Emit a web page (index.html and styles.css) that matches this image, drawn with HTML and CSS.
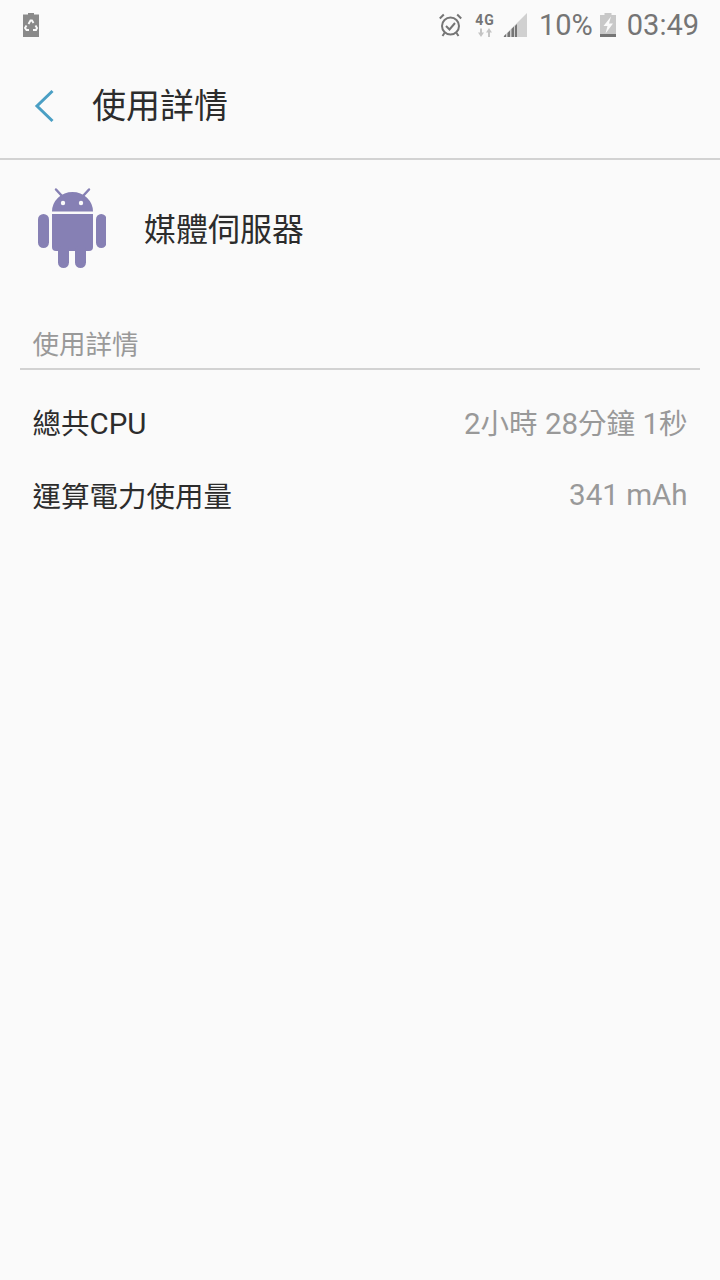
FILE: index.html
```html
<!DOCTYPE html>
<html lang="zh-Hant">
<head>
<meta charset="utf-8">
<title>使用詳情</title>
<link rel="stylesheet" href="styles.css">
</head>
<body>
<div class="status">
  <svg class="ic-recycle" width="16" height="24" viewBox="0 0 16 24"><path d="M5 0h6v1.500h5V24H0V1.500h5z" fill="#8a8a8a"/><path d="M5.500 11l2-3.500h1.500l1.500 2.500M12.500 12.500l1.500 2.500-1 2h-3M6 17H3.500l-1.500-2 1.500-2.500" fill="none" stroke="#fafafa" stroke-width="1.900"/></svg>
  <div class="status-right">
    <svg class="ic-alarm" width="23" height="24" viewBox="0 0 23 24"><circle cx="11.500" cy="13" r="8.500" fill="none" stroke="#757575" stroke-width="2"/><path d="M7 13l3.500 3.500 5.500-6.500M.8 5.500l4-4M22.200 5.500l-4-4M5.500 20l-2 3M17.500 20l2 3" fill="none" stroke="#757575" stroke-width="2"/></svg>
    <div class="net"><span class="net-label">4G</span><svg width="16" height="9" viewBox="0 0 16 9"><path d="M4 5V0.500" stroke="#c4c4c4" stroke-width="2"/><path d="M1 4.500h6L4 9z" fill="#c4c4c4"/><path d="M12 9V4" stroke="#c4c4c4" stroke-width="2"/><path d="M9 4.500h6L12 0z" fill="#c4c4c4"/></svg></div>
    <svg class="ic-signal" width="24" height="24" viewBox="0 0 24 24"><path d="M24 0v24H0z" fill="#d0d0d0"/><path d="M1 24h2v-3l-2 2zM4.500 24h2.500v-6.500l-2.500 2.500zM8.500 24H11V13.500l-2.500 2.500zM12 24h2V11l-2 2z" fill="#757575"/></svg>
    <span class="pct">10%</span>
    <svg class="ic-batt" width="16" height="24" viewBox="0 0 16 24"><path d="M4.500 0h7v2H16v22H0V2h4.500z" fill="#c8c8c8"/><rect y="21" width="16" height="3" fill="#757575"/><path d="M11 3.500L3.500 13H7.500l-2 7.500L13 10.500H9z" fill="#fafafa"/></svg>
    <span class="clock">03:49</span>
  </div>
</div>
<header class="appbar">
  <svg class="back" width="22" height="34" viewBox="0 0 22 34"><path d="M18.500 2L3 17l15.500 15" fill="none" stroke="#4a9fc4" stroke-width="3"/></svg>
  <h1 class="title">使用詳情</h1>
</header>
<section class="app">
  <svg class="android" width="68" height="82" viewBox="0 0 68 82">
    <g fill="#8680b4">
      <path d="M14 24.500a20.500 19.500 0 0 1 41 0z"/>
      <path d="M14 27h41v33a4 4 0 0 1-4 4H18a4 4 0 0 1-4-4z"/>
      <rect x="0" y="27" width="11" height="34" rx="5.500"/>
      <rect x="58" y="27" width="10.500" height="34" rx="5.200"/>
      <rect x="20" y="58" width="11" height="23" rx="5.500"/>
      <rect x="37" y="58" width="11" height="23" rx="5.500"/>
    </g>
    <path d="M24 9l-6-6.500M45 9l6-6.500" stroke="#8680b4" stroke-width="2.500" stroke-linecap="round"/>
    <circle cx="25" cy="16" r="2.200" fill="#fafafa"/><circle cx="43" cy="16" r="2.200" fill="#fafafa"/>
  </svg>
  <div class="app-name">媒體伺服器</div>
</section>
<section class="details">
  <h2 class="section-title">使用詳情</h2>
  <div class="rows">
    <div class="row"><span class="row-label"><span class="cjk">總共</span>CPU</span><span class="row-value">2<span class="cjk">小時</span> 28<span class="cjk">分鐘</span> 1<span class="cjk">秒</span></span></div>
    <div class="row"><span class="row-label"><span class="cjk">運算電力使用量</span></span><span class="row-value">341 mAh</span></div>
  </div>
</section>
</body>
</html>
```
FILE: styles.css
```css
* { box-sizing: border-box; margin: 0; padding: 0; }
html, body { height: 100%; }
body {
  width: 720px;
  height: 1280px;
  overflow: hidden;
  background: #fafafa;
  font-family: Roboto, "Noto Sans CJK TC", sans-serif;
  color: #2c2c2c;
}
.status {
  height: 50px;
  display: flex;
  align-items: center;
  justify-content: space-between;
  padding: 0 21px 0 23px;
}
.status-right { display: flex; align-items: center; }
.ic-alarm { margin-right: 13px; }
.net { display: flex; flex-direction: column; align-items: center; width: 20px; margin-right: 8px; }
.net-label { font-size: 14px; line-height: 15px; font-weight: 700; letter-spacing: 1px; color: #757575; }
.ic-signal { margin-right: 12px; }
.pct, .clock { font-size: 29px; line-height: 34px; color: #757575; }
.pct { margin-right: 7px; }
.ic-batt { margin-right: 11px; }
.appbar {
  height: 110px;
  display: flex;
  align-items: center;
  padding: 3px 0 0 34px;
  border-bottom: 2px solid #d2d2d2;
}
.back { margin-right: 36px; }
.title { font-size: 34px; font-weight: 400; line-height: 44px; }
.app {
  height: 140px;
  display: flex;
  align-items: center;
  padding: 0 0 0 38px;
}
.android { margin-bottom: 5px; }
.app-name { font-size: 32px; line-height: 42px; margin-left: 38px; }
.details { padding: 0 20px; margin-top: 15px; }
.section-title {
  font-size: 26.500px;
  font-weight: 400;
  line-height: 38px;
  color: #999;
  padding: 6px 12.500px 0;
  height: 55px;
  border-bottom: 2px solid #d2d2d2;
  display: flex;
  align-items: center;
}
.rows { padding-top: 15px; }
.row {
  height: 73px;
  display: flex;
  align-items: center;
  justify-content: space-between;
  padding: 0 12.500px;
  font-size: 29.500px;
}
.row-value { color: #999; }
.cjk { font-size: 28.500px; }
```
